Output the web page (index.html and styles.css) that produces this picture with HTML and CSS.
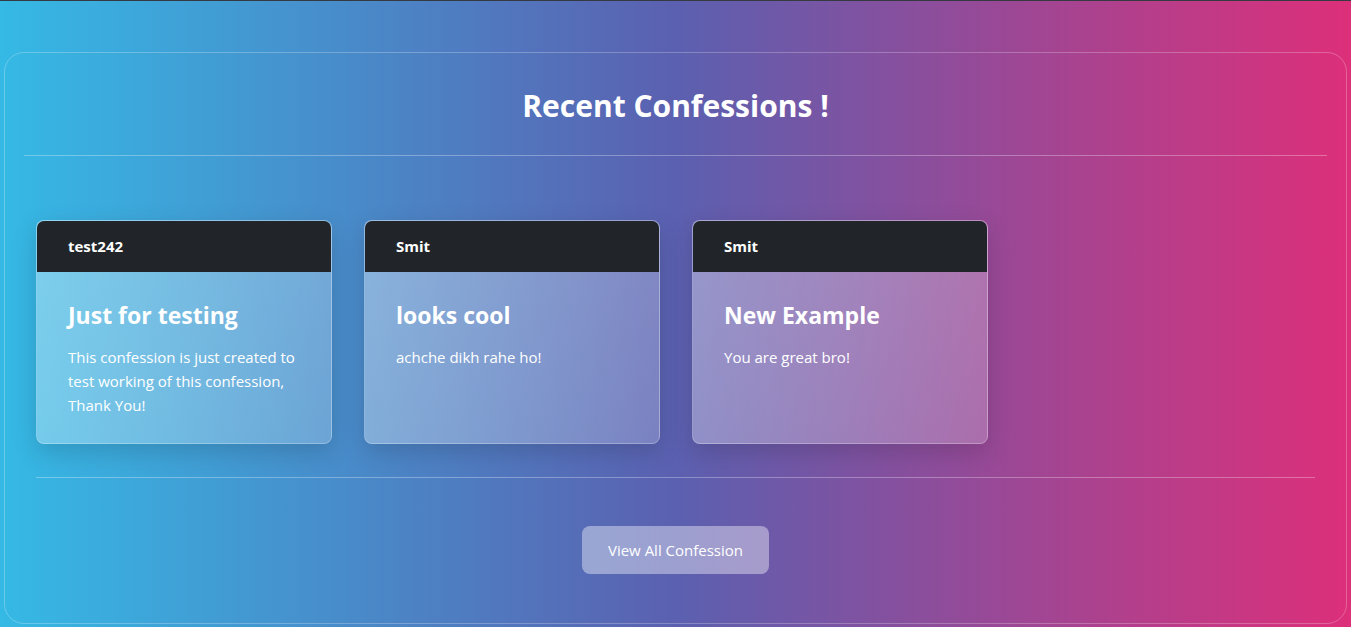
FILE: index.html
```html
<!DOCTYPE html>
<html lang="en">

<head>
  <meta charset="UTF-8">
  <meta name="viewport" content="width=device-width, initial-scale=1.0">
  <title>Recent Confessions</title>
  <link rel="stylesheet" href="styles.css">
</head>

<body>
  <div class="topbar"></div>

  <!-- recent confessions panel -->
  <section class="panel">
    <div class="panel-head">
      <h2>Recent Confessions !</h2>
    </div>

    <div class="cards">
      <div class="card">
        <div class="card-header">test242</div>
        <div class="card-body">
          <h3>Just for testing</h3>
          <p>This confession is just created to test working of this confession, Thank You!</p>
        </div>
      </div>

      <div class="card">
        <div class="card-header">Smit</div>
        <div class="card-body">
          <h3>looks cool</h3>
          <p>achche dikh rahe ho!</p>
        </div>
      </div>

      <div class="card">
        <div class="card-header">Smit</div>
        <div class="card-body">
          <h3>New Example</h3>
          <p>You are great bro!</p>
        </div>
      </div>
    </div>

    <hr class="divider">

    <div class="actions">
      <a class="btn-glass" href="#">View All Confession</a>
    </div>
  </section>
</body>

</html>
```

FILE: styles.css
```css
/* base */
* {
  margin: 0;
  padding: 0;
  box-sizing: border-box;
  font-family: "Open Sans", "Noto Sans", Arial, sans-serif;
}

body {
  background: linear-gradient(90deg, #35b9e5 0%, #5b60b0 50%, #dd2f7a 100%);
  min-height: 100vh;
  color: #fff;
  padding-bottom: 4px;
}

.topbar {
  height: 1px;
  background: #343a40;
}

/* glass panel */
.panel {
  margin: 51px 4px 0;
  padding: 0 19px;
  border: 1px solid rgba(255, 255, 255, 0.25);
  border-radius: 20px;
}

.panel-head {
  padding: 32px 0 28px;
  border-bottom: 1px solid rgba(255, 255, 255, 0.3);
  text-align: center;
}

.panel-head h2 {
  font-size: 30px;
  font-weight: 700;
  line-height: 42px;
}

/* cards row */
.cards {
  display: flex;
  gap: 32px;
  padding: 64px 12px 33px;
}

.card {
  width: 296px;
  height: 224px;
  border-radius: 8px;
  overflow: hidden;
  background: linear-gradient(120deg, rgba(255, 255, 255, 0.36), rgba(255, 255, 255, 0.2));
  border: 1px solid rgba(255, 255, 255, 0.22);
  box-shadow: 0 8px 24px rgba(0, 0, 0, 0.15);
}

.card-header {
  height: 52px;
  margin: -1px -1px 0;
  background: #212529;
  padding: 0 32px;
  display: flex;
  align-items: center;
  font-size: 15px;
  font-weight: 700;
}

.card-body {
  padding: 28px 31px;
}

.card-body h3 {
  font-size: 23px;
  font-weight: 700;
  line-height: 30px;
  margin-bottom: 15px;
}

.card-body p {
  font-size: 15px;
  line-height: 24px;
}

.divider {
  border: none;
  border-top: 1px solid rgba(255, 255, 255, 0.3);
  margin: 0 12px;
}

/* button */
.actions {
  display: flex;
  justify-content: center;
  padding: 48px 0 49px;
}

.btn-glass {
  display: inline-flex;
  align-items: center;
  justify-content: center;
  width: 187px;
  height: 48px;
  border-radius: 8px;
  background: rgba(255, 255, 255, 0.4);
  color: #fff;
  text-decoration: none;
  font-size: 15px;
}
```
